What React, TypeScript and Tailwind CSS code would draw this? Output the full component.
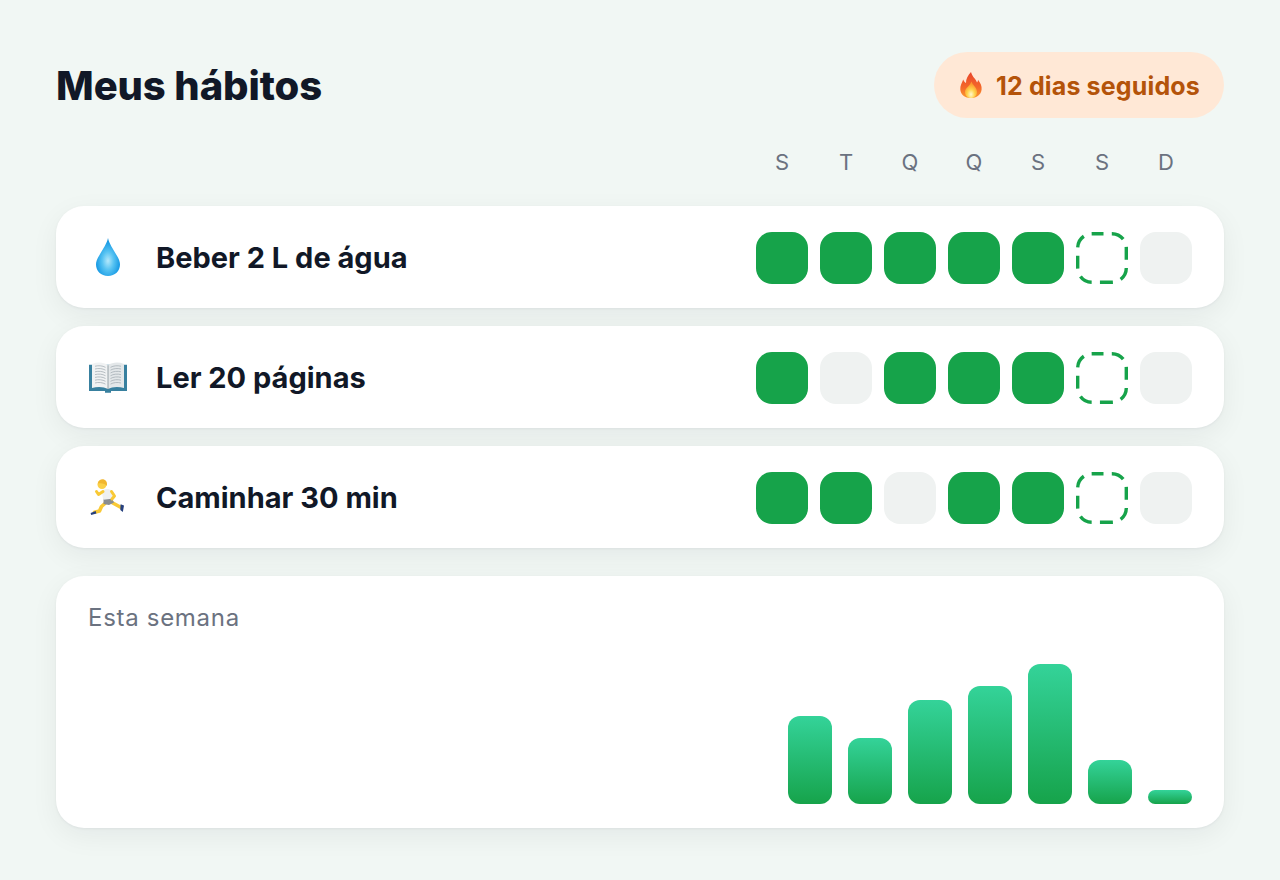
import React from "react";

function Drop() {
  return (
    <svg width="40" height="40" viewBox="0 0 40 40" aria-hidden="true">
      <defs>
        <radialGradient id="dropG" cx="50%" cy="60%" r="60%">
          <stop offset="0%" stopColor="#b4e8fb" />
          <stop offset="40%" stopColor="#57c3f2" />
          <stop offset="78%" stopColor="#1f9fe6" />
          <stop offset="100%" stopColor="#128cd8" />
        </radialGradient>
      </defs>
      <path d="M20 0C21 5 25 11 28.5 17C31 21 32 24 32 26.5C32 33 27 38 20 38C13 38 8 33 8 26.5C8 24 9 21 11.5 17C15 11 19 5 20 0Z" fill="url(#dropG)" />
    </svg>
  );
}

function Book() {
  return (
    <svg width="40" height="40" viewBox="0 0 40 40" aria-hidden="true">
      <g transform="translate(0 -0.6) scale(1 0.93)">
        <path d="M1 8H39V36H23V38H17V36H1Z" fill="#38809f" />
        <path d="M4 7C9.5 4.5 16 5 20 8.5V34C16 31.5 9.5 31 4 33Z" fill="#f0f2f3" />
        <path d="M36 7C30.5 4.5 24 5 20 8.5V34C24 31.5 30.5 31 36 33Z" fill="#e3e7e9" />
        <g stroke="#a4adb3" strokeWidth="0.8" fill="none">
          <path d="M7 9.5c3.5-1 7.5-.6 10.5 1.2M7 12.5c3.5-1 7.5-.6 10.5 1.2M7 15.5c3.5-1 7.5-.6 10.5 1.2M7 18.5c3.5-1 7.5-.6 10.5 1.2M7 21.5c3.5-1 7.5-.6 10.5 1.2M7 24.5c3.5-1 7.5-.6 10.5 1.2M7 27.5c3.5-1 7.5-.6 10.5 1.2" />
          <path d="M33 9.5c-3.5-1-7.5-.6-10.5 1.2M33 12.5c-3.5-1-7.5-.6-10.5 1.2M33 15.5c-3.5-1-7.5-.6-10.5 1.2M33 18.5c-3.5-1-7.5-.6-10.5 1.2M33 21.5c-3.5-1-7.5-.6-10.5 1.2M33 24.5c-3.5-1-7.5-.6-10.5 1.2M33 27.5c-3.5-1-7.5-.6-10.5 1.2" />
        </g>
        <path d="M20 8.5V34" stroke="#8b969d" strokeWidth="0.9" />
      </g>
    </svg>
  );
}

function Runner() {
  return (
    <svg width="40" height="40" viewBox="0 0 40 40" aria-hidden="true">
      <path d="M23 24L28.5 27L33 29.5" stroke="#f9c935" strokeWidth="3.6" fill="none" strokeLinecap="round" strokeLinejoin="round" />
      <path d="M17.5 25L13.5 28.5L11.5 33L6.5 34.2" stroke="#f9c935" strokeWidth="3.6" fill="none" strokeLinecap="round" strokeLinejoin="round" />
      <path d="M32.6 26.2L36 27.6L34.8 34L32.3 32Z" fill="#26407f" />
      <path d="M2.6 35L7.6 33L8.4 35.4L3.2 37Z" fill="#26407f" />
      <path d="M15.5 20.5L23.5 19.5L26 24.5L21 27L15.5 26Z" fill="#8a8d91" />
      <path d="M14.6 12.5C17 10.5 21.5 10.5 23.5 12.5C24.8 15 24.8 18 23.8 20.8L15.5 21.8C14.4 18.5 13.8 15 14.6 12.5Z" fill="#eef0f1" />
      <path d="M15 13.5L10.5 16.5L8.5 13.5" stroke="#f9c935" strokeWidth="3" fill="none" strokeLinecap="round" strokeLinejoin="round" />
      <path d="M23.5 13.5L26.5 18L24 21" stroke="#f9c935" strokeWidth="3" fill="none" strokeLinecap="round" strokeLinejoin="round" />
      <circle cx="14" cy="6.5" r="4.5" fill="#fbd047" />
      <path d="M9.8 5.5C10.4 2 13.5 .6 16 1.4C18.6 2.2 19.6 5 18.8 8C17 5.6 13.6 4.6 9.8 5.5Z" fill="#f1b62f" />
    </svg>
  );
}

function Flame() {
  return (
    <svg width="24" height="28" viewBox="0 0 24 28" aria-hidden="true">
      <defs>
        <linearGradient id="flameOuter" x1="0" y1="0" x2="0" y2="1">
          <stop offset="0%" stopColor="#e8452c" />
          <stop offset="60%" stopColor="#f4692a" />
          <stop offset="100%" stopColor="#fb9a2e" />
        </linearGradient>
        <radialGradient id="flameInner" cx="50%" cy="78%" r="62%">
          <stop offset="0%" stopColor="#fff8cf" />
          <stop offset="50%" stopColor="#ffd34d" />
          <stop offset="100%" stopColor="#fb9a2e" />
        </radialGradient>
      </defs>
      <path d="M12 1C13 5.5 17 8 18 11.5C18.7 10.8 19 10 19 8.8C21.5 12 23 15 22.6 18.5C22 24 17.5 27 12 27C6 27 1.6 23.5 1.3 18.5C1 14.5 3 12 4.2 8.5C5 10.5 5.8 11.5 7 12C6.8 8 9 4 12 1Z" fill="url(#flameOuter)" />
      <path d="M12.5 10.5C13.3 14 18 16 18 21C18 24.5 15.4 27 12 27C8.6 27 6 24.5 6 21C6 17 11 15 12.5 10.5Z" fill="url(#flameInner)" />
    </svg>
  );
}

type Cell = "on" | "off" | "today";

const F: Cell = "on";
const O: Cell = "off";
const H: Cell = "today";

const habits: { name: string; icon: React.ReactNode; cells: Cell[] }[] = [
  { name: "Beber 2 L de água", icon: <Drop />, cells: [F, F, F, F, F, H, O] },
  { name: "Ler 20 páginas", icon: <Book />, cells: [F, O, F, F, F, H, O] },
  { name: "Caminhar 30 min", icon: <Runner />, cells: [F, F, O, F, F, H, O] },
];

const days = ["S", "T", "Q", "Q", "S", "S", "D"];
const bars = [88, 66, 104, 118, 140, 44, 14];

function DayCell({ kind }: { kind: Cell }) {
  if (kind === "on") return <div className="h-[52px] w-[52px] rounded-2xl bg-[#16a34a]" />;
  if (kind === "off") return <div className="h-[52px] w-[52px] rounded-2xl bg-[#eff2f1]" />;
  return (
    <svg width="52" height="52" viewBox="0 0 52 52" aria-hidden="true">
      <rect
        x="1.7"
        y="1.7"
        width="48.6"
        height="48.6"
        rx="14.3"
        fill="none"
        stroke="#16a34a"
        strokeWidth="3.4"
        strokeDasharray="13 8.3"
        strokeDashoffset="1.5"
      />
    </svg>
  );
}

export default function App() {
  return (
    <div className="h-[880px] w-[1280px] overflow-hidden bg-[#f1f7f4] px-14 pt-[52px] font-['Inter',sans-serif] text-[#111827]">
      <header className="flex h-[66px] items-center justify-between">
        <h1 className="pt-0.5 text-[40px] font-extrabold leading-none tracking-[-0.1px]">Meus hábitos</h1>
        <div className="flex h-[66px] w-[290px] items-center gap-[13px] rounded-full bg-[#ffe8d6] pl-[25px]">
          <Flame />
          <span className="pt-1 text-[25px] font-bold tracking-[0.15px] text-[#b45309]">12 dias seguidos</span>
        </div>
      </header>

      <div className="mt-[30px] flex h-7 justify-end gap-3 pr-8">
        {days.map((d, i) => (
          <div key={i} className="w-[52px] text-center text-[22px] leading-7 text-[#6b7280]">
            {d}
          </div>
        ))}
      </div>

      <div className="mt-[30px] flex flex-col gap-[18px]">
        {habits.map((h) => (
          <div
            key={h.name}
            className="flex h-[102px] items-center rounded-[28px] bg-white pl-8 pr-8 pt-0.5 shadow-[0_1px_3px_rgba(17,24,39,0.05),0_8px_28px_rgba(17,24,39,0.06)]"
          >
            <div className="flex h-10 w-10 items-center justify-center">{h.icon}</div>
            <div className="ml-[28px] flex-1 text-[29px] font-bold">{h.name}</div>
            <div className="flex gap-3">
              {h.cells.map((c, i) => (
                <DayCell key={i} kind={c} />
              ))}
            </div>
          </div>
        ))}
      </div>

      <section className="mt-[28px] h-[252px] rounded-[28px] bg-white px-8 pb-6 pt-[25px] shadow-[0_1px_3px_rgba(17,24,39,0.05),0_8px_28px_rgba(17,24,39,0.06)]">
        <div className="text-[24px] leading-[34px] tracking-[0.7px] text-[#6b7280]">Esta semana</div>
        <div className="mt-[-1px] flex h-[170px] items-end justify-end gap-4">
          {bars.map((b, i) => (
            <div
              key={i}
              className="w-11 rounded-xl bg-gradient-to-b from-[#34d399] to-[#16a34a]"
              style={{ height: b }}
            />
          ))}
        </div>
      </section>
    </div>
  );
}
